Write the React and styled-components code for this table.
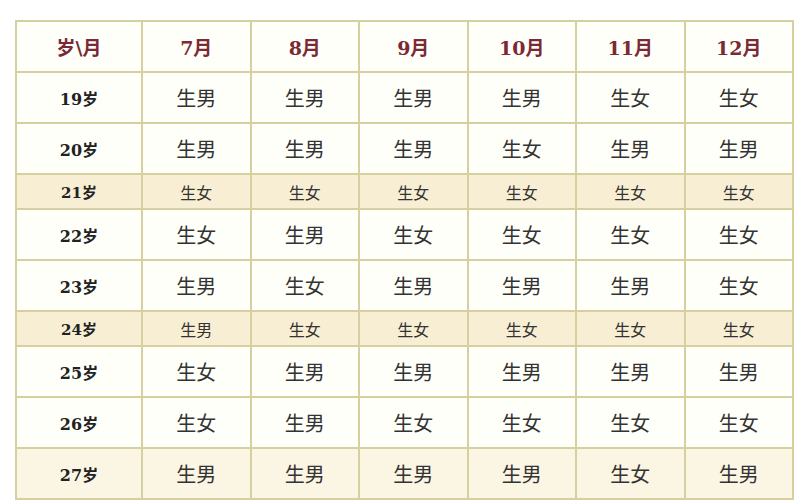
import React from 'react'
import styled, { createGlobalStyle } from 'styled-components'

const GlobalStyle = createGlobalStyle`
  html, body {
    margin: 0;
    padding: 0;
    background: #ffffff;
  }
  body {
    width: 800px;
    height: 500px;
    overflow: hidden;
    font-family: "Noto Sans CJK SC", "Noto Sans", sans-serif;
  }
`

const months = ['7月', '8月', '9月', '10月', '11月', '12月']

const rows = [
  { age: '19岁', cells: '男男男男女女' },
  { age: '20岁', cells: '男男男女男男' },
  { age: '21岁', cells: '女女女女女女', short: true },
  { age: '22岁', cells: '女男女女女女' },
  { age: '23岁', cells: '男女男男男女' },
  { age: '24岁', cells: '男女女女女女', short: true },
  { age: '25岁', cells: '女男男男男男' },
  { age: '26岁', cells: '女男女女女女' },
  { age: '27岁', cells: '男男男男女男', tint: true },
]

const Page = styled.div`
  padding: 20px 0 0 15px;
`

const Table = styled.table`
  width: 779px;
  table-layout: fixed;
  border-collapse: collapse;
  border: 2px solid #d6cf9f;
`

const Row = styled.tr`
  height: ${p => (p.$short ? 35 : 51)}px;
  background: ${p => (p.$short ? '#f8eed3' : p.$tint ? '#fbf5e4' : '#fffffa')};
`

const HeadCell = styled.th`
  border: 2px solid #d6cf9f;
  text-align: center;
  font-family: "DejaVu Serif", "Noto Sans CJK SC", serif;
  font-weight: 700;
  font-size: 19px;
  color: #7b2a35;
  padding: 0;
`

const AgeCell = styled.td`
  border: 2px solid #d6cf9f;
  text-align: center;
  font-family: "DejaVu Serif", "Noto Sans CJK SC", serif;
  font-weight: 700;
  font-size: ${p => (p.$short ? 15 : 16)}px;
  color: #222222;
  padding: 0;
`

const Cell = styled.td`
  border: 2px solid #d6cf9f;
  text-align: center;
  font-family: "Noto Sans CJK SC", sans-serif;
  font-size: ${p => (p.$short ? 16 : 20)}px;
  color: #333333;
  padding: 0;
`

export default function App() {
  return (
    <Page>
      <GlobalStyle />
      <Table>
        <colgroup>
          <col style={{ width: 126 }} />
          {months.map(m => <col key={m} />)}
        </colgroup>
        <thead>
          <Row>
            <HeadCell>岁\月</HeadCell>
            {months.map(m => <HeadCell key={m}>{m}</HeadCell>)}
          </Row>
        </thead>
        <tbody>
          {rows.map(r => (
            <Row key={r.age} $short={r.short} $tint={r.tint}>
              <AgeCell $short={r.short}>{r.age}</AgeCell>
              {r.cells.split('').map((c, i) => (
                <Cell key={i} $short={r.short}>生{c}</Cell>
              ))}
            </Row>
          ))}
        </tbody>
      </Table>
    </Page>
  )
}
